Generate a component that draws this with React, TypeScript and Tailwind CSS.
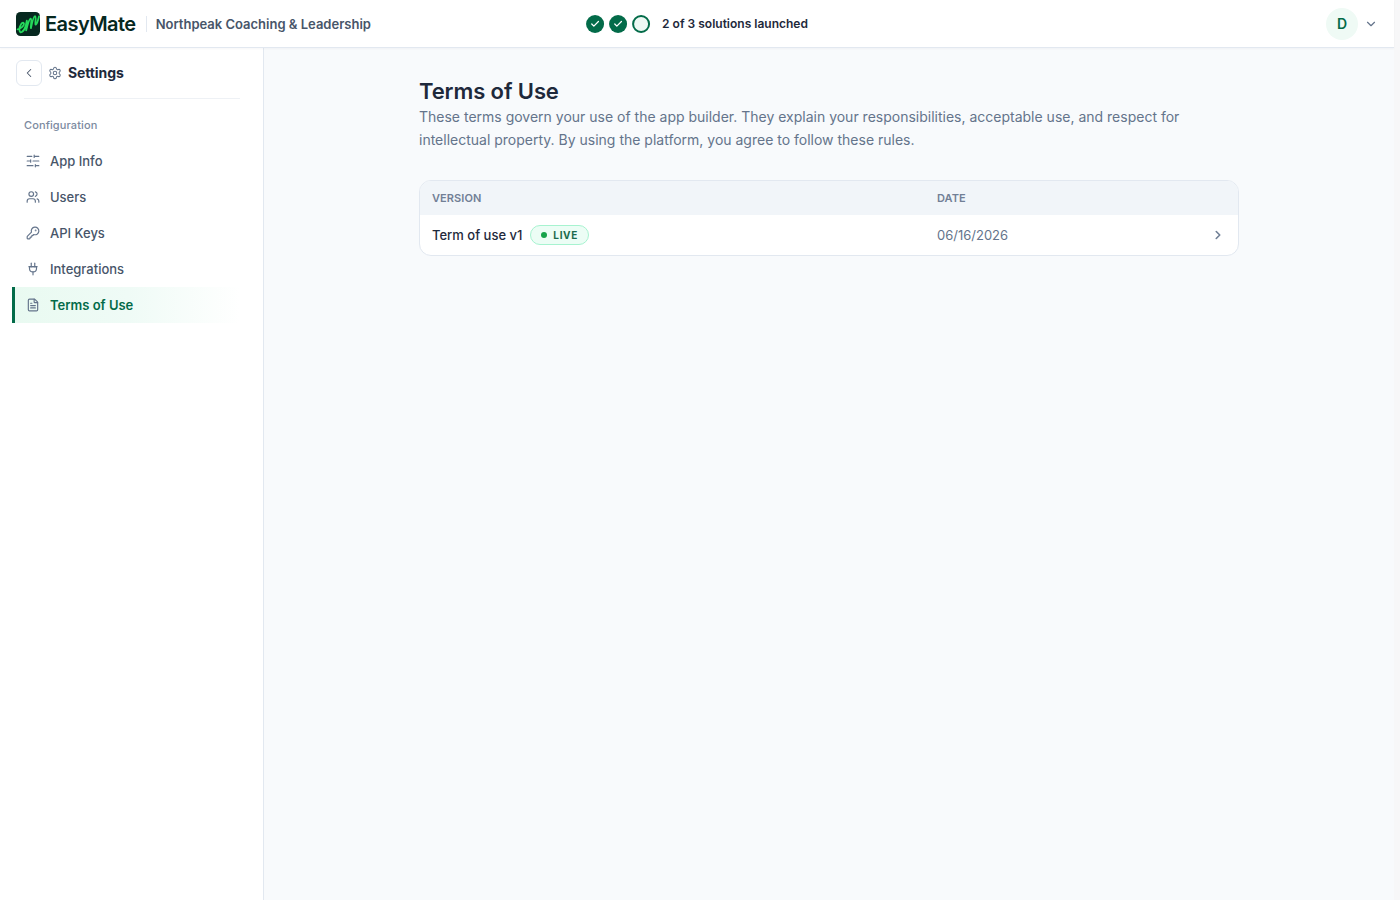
import {
  Check,
  ChevronDown,
  ChevronLeft,
  ChevronRight,
  FileText,
  KeyRound,
  Plug2,
  Settings,
  Users,
} from "lucide-react";
import clsx from "clsx";

function SlidersIcon({ className }: { className?: string }) {
  return (
    <svg
      className={className}
      viewBox="0 0 24 24"
      fill="none"
      stroke="currentColor"
      strokeWidth="2"
      strokeLinecap="round"
      strokeLinejoin="round"
    >
      <path d="M22 4h-8M10 4H2M22 12H12M8 12H2M22 20h-6M12 20H2M14 2v4M8 10v4M16 18v4" />
    </svg>
  );
}

const navItems = [
  { label: "App Info", icon: SlidersIcon },
  { label: "Users", icon: Users },
  { label: "API Keys", icon: KeyRound },
  { label: "Integrations", icon: Plug2 },
  { label: "Terms of Use", icon: FileText, active: true },
];

function Logo() {
  return (
    <div className="flex items-center gap-[5px]">
      <svg className="h-6 w-6" viewBox="0 0 24 24" fill="none">
        <rect width="24" height="24" rx="4.5" fill="#06281f" />
        <path
          d="M1.6 17.4C5 17 8.6 13.4 7.8 11.2C6.4 9.4 3.4 13.4 3.4 17.8C3.8 22.4 7.4 20.4 9.6 14.4L10.8 8.6C11.4 11.6 10.4 15.6 10.2 18.4C11.4 13.4 13 7 14.6 6.6C16.2 6.8 14.6 13 14.9 16.2C16 11 17.6 4.2 19 4.2C20.6 4.6 18.9 10.4 19.5 12.4C20.6 13.2 22 8.4 23 4.5"
          stroke="#25d95b"
          strokeWidth="1.8"
          strokeLinecap="round"
          strokeLinejoin="round"
        />
      </svg>
      <span className="pt-px text-[20px] font-semibold leading-6 tracking-[-0.55px] text-[#06281f]">
        EasyMate
      </span>
    </div>
  );
}

function Header() {
  return (
    <header className="relative flex h-12 shrink-0 items-center justify-between border-b border-[#e2e8f0] bg-white pl-4 pr-[16px] shadow-[0_1px_2px_rgba(15,23,42,0.04)]">
      <div className="flex items-center">
        <Logo />
        <div className="ml-[10px] mr-[9px] h-4 w-px bg-[#e2e8f0]" />
        <span className="text-[13px] font-semibold leading-5 text-[#475569]">
          Northpeak Coaching &amp; Leadership
        </span>
      </div>

      <div className="absolute left-1/2 flex -translate-x-1/2 items-center gap-3">
        <div className="flex items-center gap-[5px]">
          {[0, 1].map((i) => (
            <span
              key={i}
              className="flex h-[18px] w-[18px] items-center justify-center rounded-full bg-[#036b49] text-white"
            >
              <Check className="h-[10px] w-[10px]" strokeWidth={3} />
            </span>
          ))}
          <span className="h-[18px] w-[18px] rounded-full border-2 border-[#036b49] bg-[#edf8f3]" />
        </div>
        <span className="text-xs font-semibold text-[#1e293b]">
          2 of 3 solutions launched
        </span>
      </div>

      <div className="flex items-center gap-[6px]">
        <div className="flex h-8 w-8 items-center justify-center rounded-full bg-[#effaf5] text-sm font-semibold text-[#036b49]">
          D
        </div>
        <ChevronDown className="h-[14px] w-[14px] text-[#64748b]" />
      </div>
    </header>
  );
}

function Sidebar() {
  return (
    <aside className="w-[264px] shrink-0 border-r border-[#e2e8f0] bg-white">
      <div className="mt-3 flex items-center pl-4">
        <button className="flex h-[26px] w-[26px] items-center justify-center rounded-md border border-[#e2e8f0] text-[#475569]">
          <ChevronLeft className="h-[14px] w-[14px]" strokeWidth={1.75} />
        </button>
        <Settings
          className="ml-[6px] h-[14px] w-[14px] text-[#64748b]"
          strokeWidth={1.75}
        />
        <h2 className="ml-[6px] text-sm font-bold tracking-[-0.1px] text-[#1e293b]">
          Settings
        </h2>
      </div>
      <div className="ml-6 mr-[23px] mt-3 h-px bg-[#eef1f5]" />

      <p className="mb-[10px] ml-6 mt-[18px] text-[11px] font-medium leading-4 tracking-[0.11px] text-[#7c8aa0]">
        Configuration
      </p>
      <nav className="ml-3 mr-[23px]">
        {navItems.map(({ label, icon: Icon, active }) => (
          <a
            key={label}
            className={clsx(
              "flex h-9 items-center gap-[10px] border-l-[3px] pl-[11px] text-[13px] leading-5",
              active
                ? "border-[#036b49] bg-linear-to-r from-[#e9faf1] via-[#effbf6] to-white font-semibold text-[#036b49]"
                : "border-transparent font-medium text-[#475569]"
            )}
          >
            <Icon className="h-[14px] w-[14px] text-[#64748b]" />
            {label}
          </a>
        ))}
      </nav>
    </aside>
  );
}

function TermsTable() {
  return (
    <div className="mt-[29px] overflow-hidden rounded-xl border border-[#e2e8f0] bg-white">
      <div className="flex h-[34px] items-center bg-[#f1f5f9] px-3 text-[11px] font-semibold tracking-[0.08px] text-[#718096]">
        <span className="w-[505px]">VERSION</span>
        <span>DATE</span>
      </div>
      <div className="flex h-10 items-center pl-3 pr-[13px] text-[13px] leading-5">
        <div className="flex w-[505px] items-center gap-2">
          <span className="font-medium text-[#1e293b]">Term of use v1</span>
          <span className="flex h-5 items-center gap-[6px] rounded-full border border-[#a7f3d0] bg-[#ecfdf5] px-[10px] text-[10px] font-bold tracking-[0.65px] text-[#1b6b4c]">
            <span className="h-[6px] w-[6px] rounded-full bg-[#16a34a]" />
            LIVE
          </span>
        </div>
        <span className="text-[#64748b]">06/16/2026</span>
        <ChevronRight
          className="ml-auto h-[14px] w-[14px] text-[#718096]"
          strokeWidth={2.75}
        />
      </div>
    </div>
  );
}

export default function App() {
  return (
    <div className="flex h-screen overflow-hidden bg-[#f7f7f8] pr-[6px] font-['Inter',sans-serif]">
      <div className="flex min-w-0 flex-1 flex-col">
        <Header />
        <div className="flex min-h-0 flex-1">
          <Sidebar />
          <main className="flex-1 bg-[#f8fafc]">
            <div className="mx-auto w-[820px] pt-[29px]">
              <h1 className="text-[22px] font-semibold leading-7 tracking-[-0.1px] text-[#1e293b]">
                Terms of Use
              </h1>
              <p className="text-sm leading-[23px] text-[#64748b]">
                These terms govern your use of the app builder. They explain
                your responsibilities, acceptable use, and respect for
                intellectual property. By using the platform, you agree to
                follow these rules.
              </p>
              <TermsTable />
            </div>
          </main>
        </div>
      </div>
    </div>
  );
}
